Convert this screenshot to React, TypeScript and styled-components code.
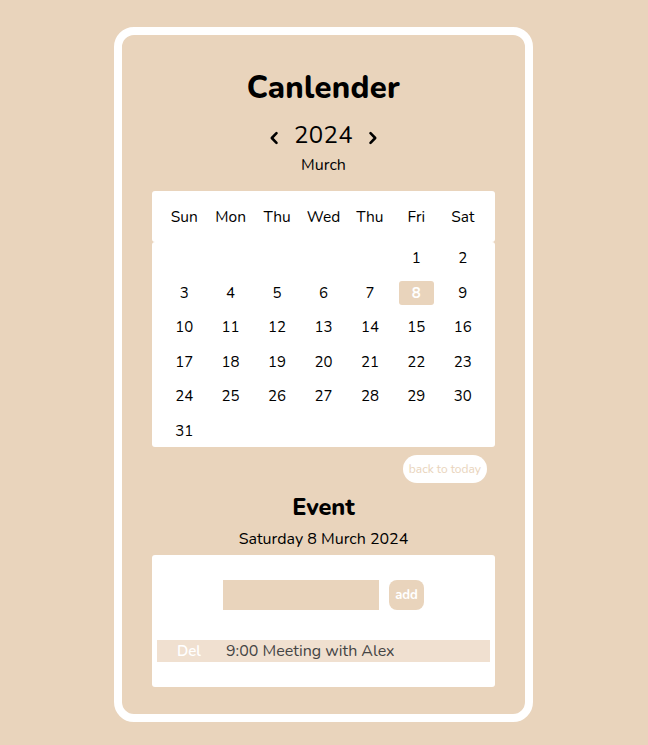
import React from "react";
import styled, { createGlobalStyle } from "styled-components";

const Global = createGlobalStyle`
  html, body { margin: 0; padding: 0; background: #e9d4bc; }
  body { font-family: "Nunito", "Lato", "Open Sans", sans-serif; color: #000; }
  * { box-sizing: border-box; }
`;

const Page = styled.div`
  display: flex;
  justify-content: flex-start;
  padding: 27px 0 23px 114px;
`;

const Card = styled.div`
  width: 419px;
  height: 695px;
  border: 8px solid #fff;
  border-radius: 20px;
  background: #e9d4bc;
  padding: 32px 30px 0;
  display: flex;
  flex-direction: column;
  align-items: center;
`;

const Title = styled.h1`
  margin: 0;
  font-size: 31px;
  font-weight: 800;
  line-height: 42px;
  letter-spacing: 0.3px;
`;

const YearRow = styled.div`
  display: flex;
  align-items: center;
  gap: 14px;
  margin-top: 12px;
  height: 28px;
`;

const Arrow = styled.button`
  border: none;
  background: none;
  padding: 6px 0 0;
  width: 12px;
  height: 28px;
  display: flex;
  align-items: center;
  justify-content: center;
  cursor: pointer;
`;

const Year = styled.span`
  font-size: 24px;
  line-height: 28px;
  letter-spacing: 0.3px;
`;

const Month = styled.div`
  font-size: 16px;
  line-height: 20px;
  margin-top: 6px;
`;

const Grid = styled.div`
  display: grid;
  grid-template-columns: repeat(7, 1fr);
  padding: 0 9px;
`;

const HeadBox = styled.div`
  width: 343px;
  margin-top: 16px;
  background: #fff;
  border-radius: 3px;
`;

const HeadGrid = styled(Grid)`
  height: 51px;
  align-items: center;
`;

const HeadCell = styled.div`
  text-align: center;
  font-size: 15.5px;
`;

const BodyBox = styled.div`
  width: 343px;
  background: #fff;
  border-radius: 3px;
  height: 205px;
`;

const BodyGrid = styled(Grid)`
  margin-top: -1px;
`;

const DayCell = styled.div`
  height: 34.5px;
  display: flex;
  align-items: center;
  justify-content: center;
`;

const DayNum = styled.span<{ $selected?: boolean }>`
  width: 35px;
  height: 24px;
  display: flex;
  align-items: center;
  justify-content: center;
  font-size: 15px;
  border-radius: 3px;
  background: ${(p) => (p.$selected ? "#e9d4bc" : "transparent")};
  color: ${(p) => (p.$selected ? "#fff" : "#000")};
  font-weight: ${(p) => (p.$selected ? 700 : 400)};
`;

const TodayRow = styled.div`
  width: 343px;
  display: flex;
  justify-content: flex-end;
  padding-right: 8px;
  margin-top: 8px;
`;

const TodayButton = styled.button`
  border: none;
  background: #fff;
  color: #e9d4bc;
  font-family: inherit;
  font-size: 12px;
  height: 28px;
  padding: 0 6px;
  border-radius: 14px;
  cursor: pointer;
`;

const EventTitle = styled.h2`
  margin: 10px 0 0;
  font-size: 23.5px;
  font-weight: 800;
  line-height: 28px;
`;

const EventDate = styled.div`
  font-size: 16px;
  line-height: 22px;
  margin-top: 7px;
`;

const EventBox = styled.div`
  width: 343px;
  height: 132px;
  margin-top: 5px;
  background: #fff;
  border-radius: 3px;
  padding: 25px 5px 0;
  display: flex;
  flex-direction: column;
`;

const InputRow = styled.div`
  display: flex;
  justify-content: center;
  gap: 10px;
`;

const EventInput = styled.input`
  width: 156px;
  height: 30px;
  border: none;
  outline: none;
  background: #e9d4bc;
`;

const AddButton = styled.button`
  width: 35px;
  height: 30px;
  border: none;
  border-radius: 8px;
  background: #e9d4bc;
  color: #fff;
  font-family: inherit;
  font-size: 13px;
  font-weight: 700;
  padding: 0;
`;

const EventItem = styled.div`
  margin-top: 30px;
  height: 22px;
  background: #f0e0d0;
  display: flex;
  align-items: center;
`;

const DelButton = styled.span`
  width: 64px;
  text-align: center;
  color: #fff;
  font-size: 15px;
  font-weight: 600;
`;

const EventText = styled.span`
  margin-left: 5px;
  color: #444;
  font-size: 16px;
`;

const Chevron = ({ dir }: { dir: "left" | "right" }) => (
  <svg width="12" height="16" viewBox="0 0 12 16" fill="none">
    <path
      d={dir === "left" ? "M8.5 3.2 L3.8 8 L8.5 12.8" : "M3.5 3.2 L8.2 8 L3.5 12.8"}
      stroke="#000"
      strokeWidth="2.6"
      strokeLinecap="round"
      strokeLinejoin="round"
    />
  </svg>
);

const weekdays = ["Sun", "Mon", "Thu", "Wed", "Thu", "Fri", "Sat"];

export default function App() {
  const cells: (number | null)[] = [];
  for (let i = 0; i < 5; i++) cells.push(null);
  for (let d = 1; d <= 31; d++) cells.push(d);

  return (
    <>
      <Global />
      <Page>
        <Card>
          <Title>Canlender</Title>
          <YearRow>
            <Arrow aria-label="previous year">
              <Chevron dir="left" />
            </Arrow>
            <Year>2024</Year>
            <Arrow aria-label="next year">
              <Chevron dir="right" />
            </Arrow>
          </YearRow>
          <Month>Murch</Month>
          <HeadBox>
            <HeadGrid>
              {weekdays.map((w, i) => (
                <HeadCell key={i}>{w}</HeadCell>
              ))}
            </HeadGrid>
          </HeadBox>
          <BodyBox>
            <BodyGrid>
              {cells.map((d, i) => (
                <DayCell key={i}>
                  {d !== null && <DayNum $selected={d === 8}>{d}</DayNum>}
                </DayCell>
              ))}
            </BodyGrid>
          </BodyBox>
          <TodayRow>
            <TodayButton>back to today</TodayButton>
          </TodayRow>
          <EventTitle>Event</EventTitle>
          <EventDate>Saturday 8 Murch 2024</EventDate>
          <EventBox>
            <InputRow>
              <EventInput />
              <AddButton>add</AddButton>
            </InputRow>
            <EventItem>
              <DelButton>Del</DelButton>
              <EventText>9:00 Meeting with Alex</EventText>
            </EventItem>
          </EventBox>
        </Card>
      </Page>
    </>
  );
}
